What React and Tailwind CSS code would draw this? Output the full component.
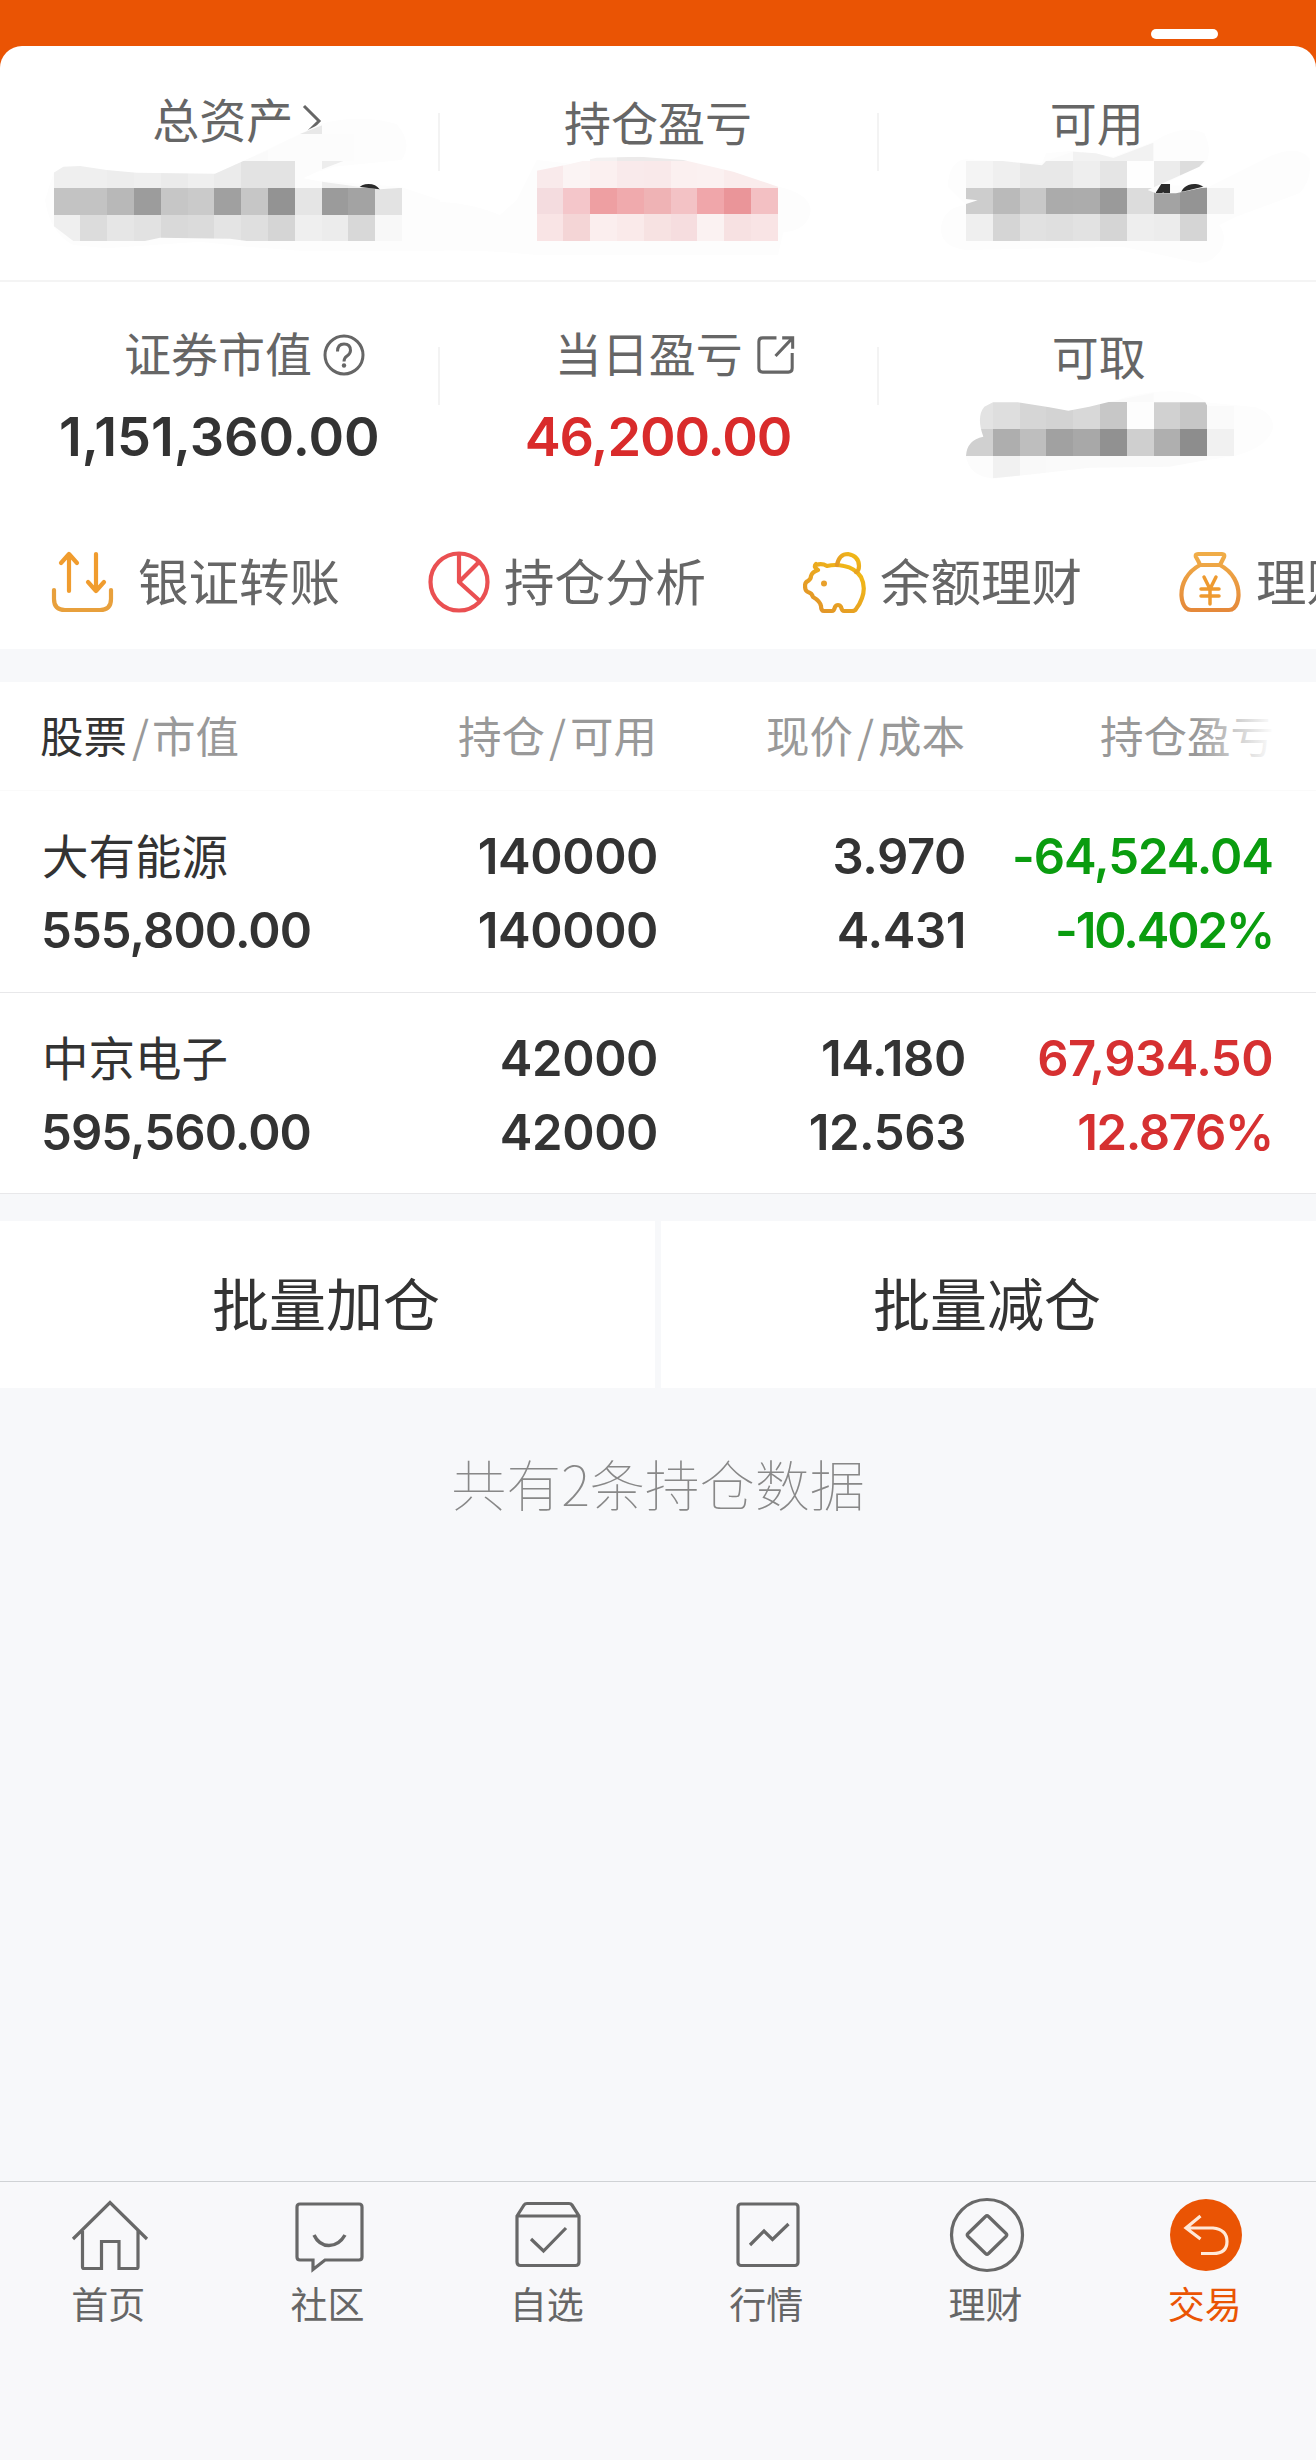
const ACTIONS = [
  { id: 'transfer', label: '银证转账', gap: 'gap-[23px]' },
  { id: 'analysis', label: '持仓分析', gap: 'gap-[13px]' },
  { id: 'balance', label: '余额理财', gap: 'gap-[13px]' },
  { id: 'wealth', label: '理财', gap: 'gap-[13px]' }
];

const HOLDINGS = [
  {
    name: '大有能源',
    value: '555,800.00',
    amount: '140000',
    available: '140000',
    price: '3.970',
    cost: '4.431',
    profit: '-64,524.04',
    rate: '-10.402%',
    color: 'text-[#0a9c0f]',
    profitTracking: 'tracking-[-1px]',
    rateTracking: 'tracking-[-2.1px]'
  },
  {
    name: '中京电子',
    value: '595,560.00',
    amount: '42000',
    available: '42000',
    price: '14.180',
    cost: '12.563',
    profit: '67,934.50',
    rate: '12.876%',
    color: 'text-[#d63031]',
    profitTracking: 'tracking-[-0.5px]',
    rateTracking: 'tracking-[-1.3px]'
  }
];

const TABS = [
  { id: 'home', label: '首页' },
  { id: 'community', label: '社区' },
  { id: 'watchlist', label: '自选' },
  { id: 'market', label: '行情' },
  { id: 'wealth', label: '理财' },
  { id: 'trade', label: '交易', active: true }
];

// Privacy masks. Coordinates are in thirds of a pixel, from the top left of the svg
const CELL = 80.4;

const MASKS = [
  {
    id: 'total',
    box: 'left-0 top-0 w-[440px] h-[290px]',
    viewBox: '0 0 1320 870',
    x: 161,
    y: 322,
    halo: 'M135 600L161 518L640 525L810 445L960 372Q1080 340 1190 372Q1240 430 1205 480L1000 500L880 540L1000 545L1200 560L1320 600V752L900 752L740 740L600 725L320 745L220 735Q150 700 135 600Z',
    clip: 'M161 518L190 500L240 498L320 510L410 518L645 521L725 485L810 448L900 402L966 376V402L1060 402V483H1030L966 508L910 535L966 545L1075 560L1140 568L1208 563V723H740L690 716L480 713L435 723H220L161 678Z',
    rows: [
      ['', '', '', '', '', '', '', '', '', '#e8e8e8', '#fcfcfc', '#fcfcfc'],
      ['', '', '', '', '', '', '', '#fafafa', '#fcfcfc', '#fcfcfc', '#fcfcfc', '#fcfcfc'],
      ['#efefef', '#efefef', '#ededed', '#efefef', '#ebebeb', '#efefef', '#ebebeb', '#e3e3e3', '#e3e3e3', '#fcfcfc', '#ededed', '#efefef'],
      ['#c3c3c3', '#c3c3c3', '#b8b8b8', '#9c9c9c', '#c6c6c6', '#cacaca', '#a0a0a0', '#c6c6c6', '#939393', '#e5e5e5', '#9b9b9b', '#a3a3a3', '#e3e3e3'],
      ['#efefef', '#dcdcdc', '#e6e6e6', '#e2e2e2', '#d9d9d9', '#dbdbdb', '#e4e4e4', '#dfdfdf', '#d5d5d5', '#efefef', '#ececec', '#d8d8d8', '#f8f8f8']
    ],
    digits: { text: '0', x: 1052, clip: 'M1060 540H1150V569L1075 560Z' }
  },
  {
    id: 'profit',
    box: 'left-[440px] top-0 w-[440px] h-[290px]',
    viewBox: '0 0 1320 870',
    x: 290,
    y: 402,
    halo: 'M230 600L290 480L1014 560Q1110 580 1112 632Q1105 690 1030 697L1014 765H290Q150 750 0 752V605Q100 610 180 645Z',
    clip: 'M290 512L380 494L470 473L600 470L730 480L880 515L1014 560V723H290Z',
    rows: [
      ['', '', '#f3f1f1', '#eceaea', '#eceaea', '#eceaea'],
      ['#f9eaeb', '#fbf4f4', '#fbf0f0', '#f9eaeb', '#f9e9ea', '#fbf0f0', '#fbf1f1', '#faecec', '#faecec'],
      ['#f4dcdf', '#f4c6ca', '#ee9fa2', '#f0aaad', '#efb3b5', '#f3c2c5', '#f0a6aa', '#ea9599', '#f3c0c3'],
      ['#f9e4e5', '#f4d5d6', '#fbeeee', '#faeaea', '#f7e2e2', '#f6dddf', '#fbf2f2', '#f7e1e2', '#f9e4e5']
    ]
  },
  {
    id: 'available',
    box: 'left-[876px] top-0 w-[440px] h-[290px]',
    viewBox: '0 0 1320 870',
    x: 270,
    y: 402,
    halo: 'M215 560Q220 480 270 478L498 490L510 460L592 452L712 470L832 425Q920 370 985 400Q1010 450 990 490L860 555L1000 560L1190 465Q1270 435 1300 475Q1310 540 1270 580L1080 650L1030 675Q1055 710 1035 750Q1000 800 950 785L740 740L270 750Q190 740 195 680Q205 620 270 615Z',
    clip: 'M270 483H380L498 496L510 483L592 455L660 460L712 474L832 428V483H986L970 500L860 550L815 570L840 580H900L994 560H1075V644H994V723H270V612L305 601L270 597Z',
    rows: [
      ['', '', '', '#fbfbfb', '#f2f2f2', '#f2f2f2', '#f2f2f2'],
      ['#f4f4f4', '#efefef', '#e8e8e8', '#e8e8e8', '#eeeeee', '#e5e5e5', '#fefefe', '#ececec', '#dddddd'],
      ['#cdcdcd', '#bababa', '#c8c8c8', '#ababab', '#acacac', '#9a9a9a', '#dcdcdc', '#a3a3a3', '#949494', '#f2f2f2'],
      ['#efefef', '#d5d5d5', '#e1e1e1', '#dfdfdf', '#e2e2e2', '#d5d5d5', '#eeeeee', '#ececec', '#d5d5d5']
    ],
    digits: { text: '49', x: 797, clip: 'M820 540H1000V556L925 574L890 579L840 580Z' }
  },
  {
    id: 'withdrawable',
    box: 'left-[656px] top-[290px] w-[660px] h-[200px]',
    viewBox: '0 0 1980 600',
    x: 930,
    y: 257,
    halo: 'M1412 320Q1600 280 1650 337L1800 352Q1850 370 1852 410Q1840 470 1735 498L1300 533L1011 566Q935 550 930 498Z',
    clip: 'M1011 337L1085 337L1180 352L1237 362L1300 350L1355 337L1412 325L1493 309V337H1648L1654 348H1735V498L1640 512L1540 530L1300 533L1130 553L1011 565Q940 560 930 498Q932 450 982 440Q960 380 985 350Z',
    rows: [
      ['', '', '', '', '', '#fafafa', '#fafafa', '', '', ''],
      ['#e3e3e3', '#dedede', '#d6d6d6', '#d3d3d3', '#d8d8d8', '#c7c7c7', '#fdfdfd', '#d1d1d1', '#c6c6c6', '#fafafa'],
      ['#d0d0d0', '#aeaeae', '#bebebe', '#a1a1a1', '#a8a8a8', '#919191', '#cfcfcf', '#afafaf', '#8d8d8d', '#f1f1f1'],
      ['#fcfcfc', '#f1f1f1', '#f9f9f9', '#fafafa', '#fafafa', '#fafafa', '#fafafa', '#fafafa', '#fafafa', '#fdfdfd']
    ]
  }
];

const PrivacyMask = ({ mask }) => (
  <svg className={`absolute pointer-events-none ${mask.box}`} viewBox={mask.viewBox}>
    <clipPath id={`mask-${mask.id}`}>
      <path d={mask.clip} />
    </clipPath>
    <path d={mask.halo} fill="#fdfdfd" />
    <g clipPath={`url(#mask-${mask.id})`} shapeRendering="crispEdges">
      {mask.rows.map((row, r) =>
        row.map((fill, c) =>
          fill ? (
            <rect key={`${r}-${c}`} x={mask.x + c * CELL} y={mask.y + r * CELL} width={CELL} height={CELL} fill={fill} />
          ) : null
        )
      )}
    </g>
    {mask.digits && (
      <>
        <clipPath id={`digits-${mask.id}`}>
          <path d={mask.digits.clip} />
        </clipPath>
        <g clipPath={`url(#digits-${mask.id})`}>
          <text x={mask.digits.x} y="668" className="font-['Inter'] font-semibold text-[162px]" fill="#2b2b2b">
            {mask.digits.text}
          </text>
        </g>
      </>
    )}
  </svg>
);

const ActionIcon = ({ id }) => {
  const props = {
    viewBox: '0 0 64 64',
    className: 'w-16 h-16 shrink-0',
    fill: 'none',
    strokeWidth: 4.2,
    strokeLinecap: 'round',
    strokeLinejoin: 'round'
  };
  if (id === 'transfer') {
    return (
      <svg {...props} stroke="#e8a03c">
        <path d="M18 41V4M10 13l8-9 8 9M45 4v37M37 32l8 9 8-9" stroke="#f09c2e" />
        <path d="M3 40v9q0 11 11 11h35q11 0 11-11v-9" />
      </svg>
    );
  }
  if (id === 'analysis') {
    return (
      <svg {...props} stroke="#ea5052">
        <circle cx="32" cy="32" r="28.5" />
        <path d="M32 4v28l21 19M32 32l19-19" strokeLinecap="butt" />
      </svg>
    );
  }
  if (id === 'balance') {
    return (
      <svg {...props} stroke="url(#pig)">
        <defs>
          <linearGradient id="pig" x1="1" y1="0" x2="0" y2="1">
            <stop offset="0" stopColor="#f3bd14" />
            <stop offset="1" stopColor="#e0902c" />
          </linearGradient>
        </defs>
        <path d="M13 15q6-2 11 1 8-2 17 0 11 2 17 11 5 10 1 21-2 6-6 11-1 2-4 2h-8q-2 0-3-4-1-2-3-2t-3 2q-1 4-3 4h-8q-3 0-3-5-1-5-8-9-1-4-5-5-3-1-3-6 0-4 3-5 3-2 3-5 1-4 7-6-5-3-2-6Z" />
        <path d="M34 15q2-11 11-11 11 2 11 12 0 5-3 6" />
        <circle cx="21" cy="33.500" r="3" fill="#e8a02c" stroke="none" />
      </svg>
    );
  }
  return (
    <svg {...props} stroke="url(#bag)">
      <defs>
        <linearGradient id="bag" x1="0" y1="0" x2="0" y2="1">
          <stop offset="0" stopColor="#f0ad48" />
          <stop offset="1" stopColor="#e5893a" />
        </linearGradient>
      </defs>
      <path d="M21 15Q20 12 17 7q-1-3 2-3h24q3 0 2 3-2 4-4 8ZM21 15C8 22 2 34 2.500 46Q3 54 7 58q2 2 5 2h38q3 0 5-2 4-4 4.500-12C60 34 54 22 41 15" />
      <path d="M25 27l6 12 6-12M31 39v15M22 39h18M22 46h18" stroke="#ee9a30" strokeWidth="3.500" />
    </svg>
  );
};

const TabIcon = ({ id }) => {
  const props = {
    viewBox: '0 0 80 80',
    className: 'w-20 h-20',
    fill: 'none',
    stroke: '#686868',
    strokeWidth: 3.2
  };
  switch (id) {
    case 'home':
      return (
        <svg {...props}>
          <path d="M3 44L40 7.500 77 44M12.500 36v36q0 1.500 1.500 1.500h17.500V46.500h17.500v27H66.500q1.500 0 1.500-1.500V36" />
        </svg>
      );
    case 'community':
      return (
        <svg {...props}>
          <path d="M11 9h59q3 0 3 3v50q0 3-3 3H36L24 74.500V65H11q-3 0-3-3V12q0-3 3-3Z" />
          <path d="M25 40q5 10.500 15 10.500T56 40" strokeWidth="3.500" />
        </svg>
      );
    case 'watchlist':
      return (
        <svg {...props}>
          <path d="M9 21l7-11q1-1.500 3-1.500h42q2 0 3 1.500l7 11v46q0 3.500-3.500 3.500h-55Q9 70.500 9 67ZM9 21h62" />
          <path d="M23 44l12.500 12L58 33" />
        </svg>
      );
    case 'market':
      return (
        <svg {...props}>
          <rect x="10" y="9" width="60" height="61.500" rx="3" />
          <path d="M22 50l14-14 8.500 8.500L60.500 29" />
        </svg>
      );
    case 'wealth':
      return (
        <svg {...props}>
          <circle cx="40" cy="40" r="35.500" />
          <path d="M41.500 21.500l17.500 17q1.500 1.500 0 3l-17.500 17q-1.500 1.500-3 0L21 41.500q-1.500-1.500 0-3l17.500-17q1.500-1.500 3 0Z" />
        </svg>
      );
    default:
      return (
        <svg {...props} stroke="#ffe9d8">
          <circle cx="40" cy="40" r="36" fill="#ea5404" stroke="none" />
          <path d="M34.500 21L20 33l14.500 11M20 33h27q14 1.500 14 13.500T47 58.500H35" />
        </svg>
      );
  }
};

const Divider = ({ className }) => (
  <div className={`absolute w-0.5 h-[58px] bg-[#f3f3f3] ${className}`} />
);

const AccountSummary = () => (
  <section className="relative bg-white rounded-t-[22px] h-[603px] text-[47px] leading-[60px] text-[#666]">
    <div className="relative grid grid-cols-3 h-[236px] border-b-2 border-[#f4f4f4]">
      <div className="flex items-start justify-center pt-[42px] pl-[37px]">
        <span>总资产</span>
        <svg viewBox="0 0 28 60" className="ml-0.5 w-7 h-[60px]" fill="none" stroke="#666" strokeWidth="3">
          <path d="M9 18l15 15-15 15" />
        </svg>
      </div>
      <div className="pt-[45px] text-center">持仓盈亏</div>
      <div className="pt-[45px] text-center">可用</div>
      <Divider className="left-[438px] top-[67px]" />
      <Divider className="left-[877px] top-[67px]" />
    </div>
    <div className="relative grid grid-cols-3 h-[230px]">
      <div className="pt-[40px]">
        <div className="flex items-center gap-[11px] pl-[124px]">
          <span>证券市值</span>
          <svg viewBox="0 0 42 42" className="mt-[6px] w-[42px] h-[42px]" fill="none" stroke="#666" strokeWidth="3">
            <circle cx="21" cy="21" r="19" />
            <path d="M14.500 17.500q0-7.500 6.500-7.500t6.500 6.500q0 3-3.500 5.500-3 2-3 5.500" />
            <circle cx="21" cy="31.500" r="2.200" fill="#666" stroke="none" />
          </svg>
        </div>
        <div className="mt-[25px] text-center font-['Inter'] font-semibold text-[54px] text-[#333]">1,151,360.00</div>
      </div>
      <div className="pt-[40px]">
        <div className="flex items-center gap-[13px] pl-[116px]">
          <span>当日盈亏</span>
          <svg viewBox="0 0 42 42" className="mt-[6px] w-10 h-10" fill="none" stroke="#666" strokeWidth="3.2">
            <path d="M21.500 3H7q-4 0-4 4v28q0 4 4 4h27q4 0 4-4V19M38.500 14.500V3h-11M38.500 3L20.500 22" />
          </svg>
        </div>
        <div className="mt-[25px] text-center font-['Inter'] font-semibold text-[54px] tracking-[-1.1px] text-[#d92b2b]">46,200.00</div>
      </div>
      <div className="pt-[43px] pl-1 text-center">可取</div>
      <Divider className="left-[438px] top-[65px]" />
      <Divider className="left-[877px] top-[65px]" />
    </div>
    <div className="flex pl-[51px] pt-[33px] whitespace-nowrap text-[50.500px] leading-[74px]">
      {ACTIONS.map((action) => (
        <div key={action.id} className={`flex items-center shrink-0 h-[74px] w-[376px] ${action.gap}`}>
          <ActionIcon id={action.id} />
          <span className="pb-[7px]">{action.label}</span>
        </div>
      ))}
    </div>
  </section>
);

const HoldingRow = ({ item }) => (
  <div className="grid grid-cols-[309px_308px_308px_307px] pl-[41px] pt-[29px] h-[202px] last:h-[201px] border-b border-[#e8e8ea] text-right font-['Inter'] font-semibold text-[49px] leading-[74px] tracking-[-0.4px] text-[#333] whitespace-nowrap">
    <div className="text-left">
      <div className="-mt-[3px] mb-[3px] pl-px font-['Noto_Sans_CJK_SC'] font-normal text-[46.500px] tracking-normal">{item.name}</div>
      <div className="tracking-[-0.9px]">{item.value}</div>
    </div>
    <div>
      <div>{item.amount}</div>
      <div>{item.available}</div>
    </div>
    <div>
      <div>{item.price}</div>
      <div>{item.cost}</div>
    </div>
    <div className={`flex flex-col items-end ${item.color}`}>
      <div className={item.profitTracking}>{item.profit}</div>
      <div className={item.rateTracking}>{item.rate}</div>
    </div>
  </div>
);

const Holdings = () => (
  <section className="mt-[33px] bg-white">
    <div className="relative grid grid-cols-[308px_309px_308px_309px] pl-[40px] h-[109px] border-b border-[#fafafa] text-right text-[43.500px] leading-[105px] text-[#999]">
      <div className="text-left">
        <span className="text-[#333]">股票</span>
        <span className="pl-[5px] pr-[3px]">/</span>市值
      </div>
      <div>持仓<span className="px-[4px]">/</span>可用</div>
      <div>现价<span className="px-[4px]">/</span>成本</div>
      <div>持仓盈亏</div>
      <div className="absolute right-0 top-0 w-[120px] h-[108px] bg-gradient-to-r from-white/0 to-white to-65%" />
    </div>
    {HOLDINGS.map((item) => (
      <HoldingRow key={item.name} item={item} />
    ))}
  </section>
);

const TabBar = () => (
  <nav className="grid grid-cols-6 h-[279px] pt-[13px] border-t border-[#d0d2d5] bg-[#f8f8fa]">
    {TABS.map((tab) => (
      <div key={tab.id} className="flex flex-col items-center">
        <TabIcon id={tab.id} />
        <span className={`mt-[4px] pr-[3px] text-[37px] leading-[48px] ${tab.active ? 'text-[#ea5404]' : 'text-[#666]'}`}>
          {tab.label}
        </span>
      </div>
    ))}
  </nav>
);

const App = () => {
  return (
    <div className="relative flex flex-col w-[1316px] h-[2460px] overflow-hidden bg-[#f7f8fa] font-['Noto_Sans_CJK_SC',sans-serif]">
      <div className="bg-[#ea5404]">
        <div className="h-[46px] pt-[29px]">
          <div className="ml-[1151px] w-[67px] h-[10px] rounded-full bg-white" />
        </div>
        <AccountSummary />
      </div>
      <Holdings />
      <div className="mt-[27px] grid grid-cols-2 gap-[6px] h-[167px] text-center text-[57px] leading-[161px] text-[#333]">
        <div className="bg-white pr-[3px]">批量加仓</div>
        <div className="bg-white pr-[3px]">批量减仓</div>
      </div>
      <p className="grow pt-[54px] text-center text-[55px] leading-[80px] font-thin text-[#888]">
        共有2条持仓数据
      </p>
      <TabBar />
      {MASKS.map((mask) => (
        <PrivacyMask key={mask.id} mask={mask} />
      ))}
    </div>
  );
};

export default App;
